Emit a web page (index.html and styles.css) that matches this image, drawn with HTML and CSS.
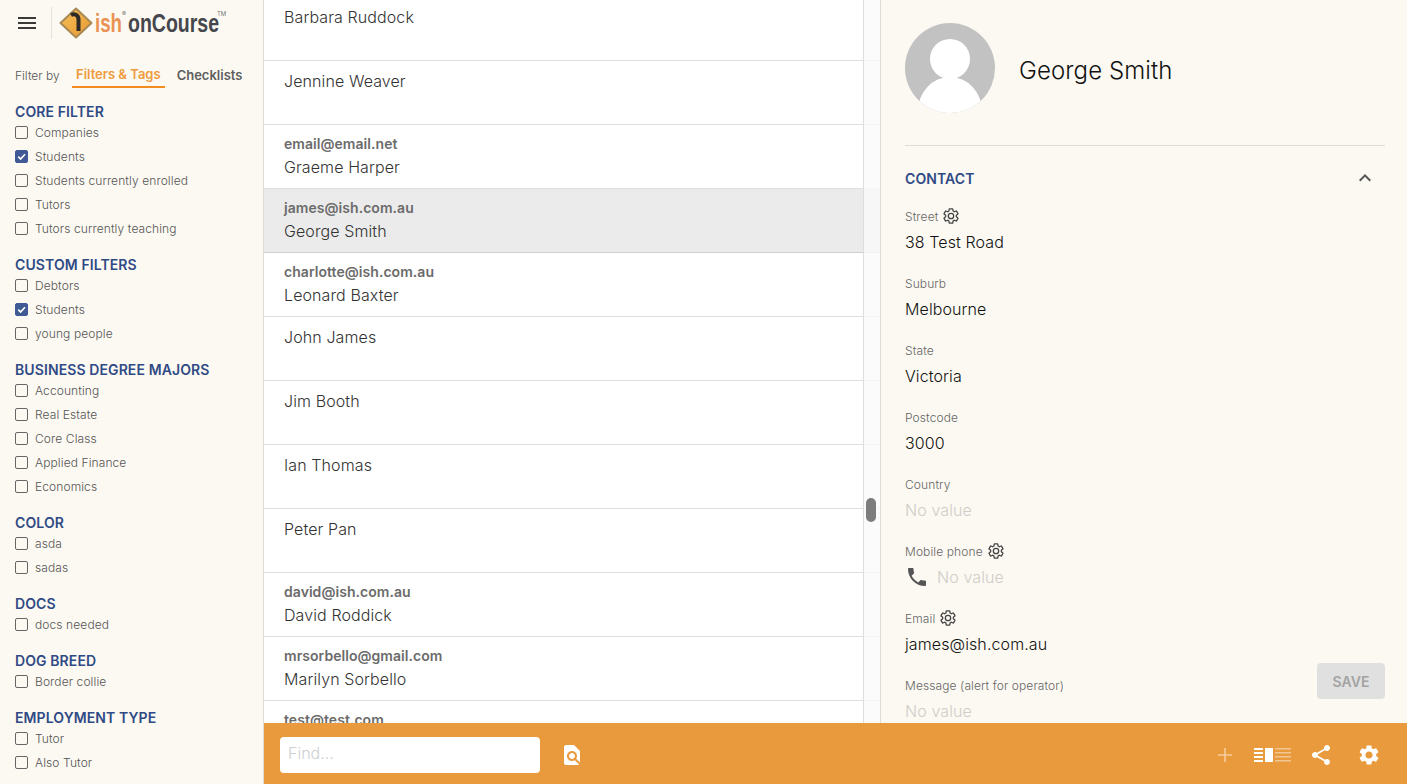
FILE: index.html
```html
<!DOCTYPE html>
<html lang="en">
<head>
  <meta charset="UTF-8" />
  <title>Contacts | ish onCourse</title>
  <link rel="stylesheet" href="styles.css">
</head>
<body>
  <div class="app">

    <aside class="sidebar">
      <div class="brand">
        <svg class="menu-icon" viewBox="0 0 24 24"><path d="M3 18h18v-2H3v2zm0-5h18v-2H3v2zm0-7v2h18V6H3z"/></svg>
        <div class="brand-logo">
          <svg class="logo-mark" viewBox="0 0 34 32">
            <defs>
              <linearGradient id="signFill" x1="0" y1="0" x2="1" y2="1">
                <stop offset="0" stop-color="#f6c25c"/>
                <stop offset="1" stop-color="#e8962f"/>
              </linearGradient>
            </defs>
            <path d="M17 1.500 32.500 16 17 30.500 1.500 16z" fill="url(#signFill)" stroke="#a98a55" stroke-width="2" stroke-linejoin="round"/>
            <path d="M12 8c3-1.500 7-1 7.500 4v12" fill="none" stroke="#2d2a28" stroke-width="4"/>
          </svg>
          <span class="logo-word logo-ish">ish</span>
          <span class="logo-word logo-name">onCourse</span>
          <sup class="logo-reg">®</sup>
          <sup class="logo-tm">TM</sup>
        </div>
      </div>

      <div class="filter-tabs">
        <span class="filter-label">Filter by</span>
        <span class="filter-tab active">Filters &amp; Tags</span>
        <span class="filter-tab">Checklists</span>
      </div>

      <section class="filter-group">
        <h3>CORE FILTER</h3>
        <div class="check-row"><span class="box"></span>Companies</div>
        <div class="check-row"><span class="box checked"><svg viewBox="0 0 12 12"><path d="M2.500 6.200 5 8.700 9.800 3.500"/></svg></span>Students</div>
        <div class="check-row"><span class="box"></span>Students currently enrolled</div>
        <div class="check-row"><span class="box"></span>Tutors</div>
        <div class="check-row"><span class="box"></span>Tutors currently teaching</div>
      </section>

      <section class="filter-group">
        <h3>CUSTOM FILTERS</h3>
        <div class="check-row"><span class="box"></span>Debtors</div>
        <div class="check-row"><span class="box checked"><svg viewBox="0 0 12 12"><path d="M2.500 6.200 5 8.700 9.800 3.500"/></svg></span>Students</div>
        <div class="check-row"><span class="box"></span>young people</div>
      </section>

      <section class="filter-group">
        <h3>BUSINESS DEGREE MAJORS</h3>
        <div class="check-row"><span class="box"></span>Accounting</div>
        <div class="check-row"><span class="box"></span>Real Estate</div>
        <div class="check-row"><span class="box"></span>Core Class</div>
        <div class="check-row"><span class="box"></span>Applied Finance</div>
        <div class="check-row"><span class="box"></span>Economics</div>
      </section>

      <section class="filter-group">
        <h3>COLOR</h3>
        <div class="check-row"><span class="box"></span>asda</div>
        <div class="check-row"><span class="box"></span>sadas</div>
      </section>

      <section class="filter-group">
        <h3>DOCS</h3>
        <div class="check-row"><span class="box"></span>docs needed</div>
      </section>

      <section class="filter-group">
        <h3>DOG BREED</h3>
        <div class="check-row"><span class="box"></span>Border collie</div>
      </section>

      <section class="filter-group">
        <h3>EMPLOYMENT TYPE</h3>
        <div class="check-row"><span class="box"></span>Tutor</div>
        <div class="check-row"><span class="box"></span>Also Tutor</div>
      </section>
    </aside>

    <main class="main">
      <div class="panes">
        <div class="list-pane">
          <div class="list-scroll">
            <div class="row row-clipped"><div class="row-name">Barbara Ruddock</div></div>
            <div class="row"><div class="row-name">Jennine Weaver</div></div>
            <div class="row"><div class="row-email">email@email.net</div><div class="row-name">Graeme Harper</div></div>
            <div class="row selected"><div class="row-email">james@ish.com.au</div><div class="row-name">George Smith</div></div>
            <div class="row"><div class="row-email">charlotte@ish.com.au</div><div class="row-name">Leonard Baxter</div></div>
            <div class="row"><div class="row-name">John James</div></div>
            <div class="row"><div class="row-name">Jim Booth</div></div>
            <div class="row"><div class="row-name">Ian Thomas</div></div>
            <div class="row"><div class="row-name">Peter Pan</div></div>
            <div class="row"><div class="row-email">david@ish.com.au</div><div class="row-name">David Roddick</div></div>
            <div class="row"><div class="row-email">mrsorbello@gmail.com</div><div class="row-name">Marilyn Sorbello</div></div>
            <div class="row"><div class="row-email">test@test.com</div></div>
          </div>
          <div class="scroll-track"><div class="scroll-thumb"></div></div>
        </div>

        <div class="detail-pane">
          <div class="profile">
            <svg class="avatar" viewBox="0 0 90 90">
              <defs><clipPath id="avatarClip"><circle cx="45" cy="45" r="45"/></clipPath></defs>
              <g clip-path="url(#avatarClip)">
                <rect width="90" height="90" fill="#c2c2c2"/>
                <circle cx="45" cy="36" r="20" fill="#fff"/>
                <ellipse cx="45" cy="88" rx="32" ry="34" fill="#fff"/>
              </g>
            </svg>
            <div class="profile-name">George Smith</div>
          </div>

          <div class="section-head">
            <span class="section-title">CONTACT</span>
            <svg class="chevron" viewBox="0 0 24 24"><path d="M12 8l-6 6 1.410 1.410L12 10.830l4.590 4.580L18 14z"/></svg>
          </div>

          <div class="field">
            <div class="field-label">Street <svg class="gear" viewBox="0 0 24 24"><use href="#gearPath"/></svg></div>
            <div class="field-value">38 Test Road</div>
          </div>
          <div class="field">
            <div class="field-label">Suburb</div>
            <div class="field-value">Melbourne</div>
          </div>
          <div class="field">
            <div class="field-label">State</div>
            <div class="field-value">Victoria</div>
          </div>
          <div class="field">
            <div class="field-label">Postcode</div>
            <div class="field-value">3000</div>
          </div>
          <div class="field">
            <div class="field-label">Country</div>
            <div class="field-value empty">No value</div>
          </div>
          <div class="field">
            <div class="field-label">Mobile phone <svg class="gear" viewBox="0 0 24 24"><use href="#gearPath"/></svg></div>
            <div class="field-value empty with-icon">
              <svg class="phone" viewBox="0 0 24 24"><path d="M6.620 10.790c1.440 2.830 3.760 5.140 6.590 6.590l2.200-2.200c.27-.27.67-.36 1.020-.24 1.120.37 2.330.57 3.570.57.55 0 1 .45 1 1V20c0 .55-.45 1-1 1-9.390 0-17-7.610-17-17 0-.55.45-1 1-1h3.500c.55 0 1 .45 1 1 0 1.250.2 2.450.57 3.570.11.35.03.74-.25 1.020l-2.200 2.200z"/></svg>
              No value
            </div>
          </div>
          <div class="field">
            <div class="field-label">Email <svg class="gear" viewBox="0 0 24 24"><use href="#gearPath"/></svg></div>
            <div class="field-value">james@ish.com.au</div>
          </div>
          <div class="field">
            <div class="field-label">Message (alert for operator)</div>
            <div class="field-value empty">No value</div>
          </div>

          <button class="save-btn" type="button">SAVE</button>
        </div>
      </div>

      <footer class="bottom-bar">
        <input class="find-input" type="text" placeholder="Find..." />
        <svg class="find-icon" viewBox="0 0 24 24"><path d="M20 19.590V8l-6-6H6c-1.100 0-1.990.9-1.990 2L4 20c0 1.100.89 2 1.990 2H18c.45 0 .85-.15 1.190-.4l-4.430-4.430c-.8.52-1.740.83-2.760.83-2.760 0-5-2.240-5-5s2.240-5 5-5 5 2.240 5 5c0 1.020-.31 1.960-.83 2.750L20 19.590zM9 13c0 1.660 1.340 3 3 3s3-1.340 3-3-1.340-3-3-3-3 1.340-3 3z"/></svg>
        <div class="bar-actions">
          <svg class="plus-icon" viewBox="0 0 16 16"><path d="M8 1v14M1 8h14"/></svg>
          <svg class="view-icon" viewBox="0 0 37 14">
            <path class="view-solid" d="M0 0h9v2H0zM0 4h9v2H0zM0 8h9v2H0zM0 12h9v2H0zM11 0h8v14h-8z"/>
            <path class="view-faint" d="M21 0h16v1.500H21zM21 4h16v1.500H21zM21 8h16v1.500H21zM21 12h16v1.500H21z"/>
          </svg>
          <svg class="bar-icon" viewBox="0 0 24 24"><path d="M18 16.080c-.76 0-1.440.3-1.960.77L8.910 12.700c.05-.23.09-.46.09-.7s-.04-.47-.09-.7l7.050-4.110c.54.5 1.250.81 2.040.81 1.660 0 3-1.340 3-3s-1.340-3-3-3-3 1.340-3 3c0 .24.04.47.09.7L8.040 9.810C7.500 9.310 6.790 9 6 9c-1.660 0-3 1.340-3 3s1.340 3 3 3c.79 0 1.500-.31 2.040-.81l7.120 4.160c-.05.21-.08.43-.08.65 0 1.610 1.310 2.920 2.920 2.920 1.610 0 2.920-1.310 2.920-2.920s-1.310-2.920-2.920-2.920z"/></svg>
          <svg class="bar-icon" viewBox="0 0 24 24"><path d="M19.140 12.940c.04-.3.06-.61.06-.94 0-.32-.02-.64-.07-.94l2.030-1.580c.18-.14.23-.41.12-.61l-1.920-3.320c-.12-.22-.37-.29-.59-.22l-2.390.96c-.5-.38-1.030-.7-1.620-.94l-.36-2.540c-.04-.24-.24-.41-.48-.41h-3.840c-.24 0-.43.17-.47.41l-.36 2.540c-.59.24-1.130.57-1.620.94l-2.390-.96c-.22-.08-.47 0-.59.22L2.740 8.870c-.12.21-.08.47.12.61l2.030 1.580c-.05.3-.09.63-.09.94s.02.64.07.94l-2.030 1.580c-.18.14-.23.41-.12.61l1.920 3.320c.12.22.37.29.59.22l2.390-.96c.5.38 1.030.7 1.620.94l.36 2.540c.05.24.24.41.48.41h3.840c.24 0 .44-.17.47-.41l.36-2.540c.59-.24 1.130-.56 1.620-.94l2.390.96c.22.08.47 0 .59-.22l1.920-3.320c.12-.22.07-.47-.12-.61l-2.010-1.580zM12 15.600c-1.980 0-3.600-1.620-3.600-3.600s1.620-3.600 3.600-3.600 3.600 1.620 3.600 3.600-1.620 3.600-3.600 3.600z"/></svg>
        </div>
      </footer>
    </main>
  </div>

  <svg class="svg-defs" width="0" height="0">
    <defs>
      <path id="gearPath" d="M19.140 12.940c.04-.3.06-.61.06-.94 0-.32-.02-.64-.07-.94l2.030-1.580c.18-.14.23-.41.12-.61l-1.920-3.320c-.12-.22-.37-.29-.59-.22l-2.390.96c-.5-.38-1.030-.7-1.620-.94l-.36-2.540c-.04-.24-.24-.41-.48-.41h-3.840c-.24 0-.43.17-.47.41l-.36 2.540c-.59.24-1.130.57-1.620.94l-2.390-.96c-.22-.08-.47 0-.59.22L2.740 8.870c-.12.21-.08.47.12.61l2.030 1.580c-.05.3-.09.63-.09.94s.02.64.07.94l-2.030 1.580c-.18.14-.23.41-.12.61l1.920 3.320c.12.22.37.29.59.22l2.390-.96c.5.38 1.030.7 1.620.94l.36 2.540c.05.24.24.41.48.41h3.840c.24 0 .44-.17.47-.41l.36-2.540c.59-.24 1.130-.56 1.620-.94l2.390.96c.22.08.47 0 .59-.22l1.920-3.320c.12-.22.07-.47-.12-.61l-2.010-1.580zM12 15.600c-1.980 0-3.600-1.620-3.600-3.600s1.620-3.600 3.600-3.600 3.600 1.620 3.600 3.600-1.620 3.600-3.600 3.600z"/>
    </defs>
  </svg>
</body>
</html>
```

FILE: styles.css
```css
* {
  margin: 0;
  padding: 0;
  box-sizing: border-box;
  font-family: Inter, 'Noto Sans', sans-serif;
}

html, body {
  height: 100%;
  overflow: hidden;
}

body {
  background: #fcf9f2;
  color: #111;
}

.svg-defs {
  position: absolute;
}

.app {
  display: flex;
  height: 100vh;
}

/* left filter column */
.sidebar {
  width: 264px;
  flex-shrink: 0;
  height: 100%;
  overflow: hidden;
  border-right: 1px solid #dedcd6;
  padding: 0 15px;
}

.brand {
  display: flex;
  align-items: center;
  height: 46px;
}

.menu-icon {
  width: 24px;
  height: 24px;
  flex-shrink: 0;
  fill: #3a3a38;
}

.brand-logo {
  position: relative;
  display: flex;
  align-items: center;
  height: 32px;
  margin-left: 12px;
  padding-left: 7px;
  border-left: 1px solid #e4e1da;
}

.logo-mark {
  width: 34px;
  height: 32px;
  flex-shrink: 0;
}

.logo-word {
  display: block;
  font-family: 'Liberation Sans', sans-serif;
  font-weight: 700;
  font-size: 26px;
  line-height: 32px;
  white-space: nowrap;
  transform-origin: left center;
  transform: scaleX(0.75);
}

.logo-ish {
  width: 33px;
  margin-left: 2px;
  color: #ea9255;
  transform: scaleX(0.72);
}

.logo-name {
  width: 92px;
  color: #45474d;
}

.logo-reg,
.logo-tm {
  position: absolute;
  top: 3px;
  color: #777;
  font-size: 6px;
  line-height: 8px;
}

.logo-reg {
  left: 70px;
}

.logo-tm {
  left: 165px;
}

.filter-tabs {
  display: flex;
  align-items: center;
  height: 24px;
  margin-top: 17px;
  font-size: 13px;
  white-space: nowrap;
}

.filter-label {
  width: 57px;
  flex-shrink: 0;
  font-size: 12px;
  font-weight: 300;
  color: #555;
}

.filter-tab {
  flex-shrink: 0;
  font-weight: 600;
  color: #5e5e5e;
  line-height: 24px;
  padding: 0 4px;
  margin-right: 8px;
}

.filter-tab.active {
  color: #ee9b3d;
  border-bottom: 2px solid #f28c1e;
}

.filter-group {
  margin-bottom: 16px;
}

.filter-tabs + .filter-group {
  margin-top: 16px;
}

.filter-group h3 {
  font-size: 14px;
  font-weight: 600;
  line-height: 17px;
  letter-spacing: 0.1px;
  color: #2f4a85;
}

.check-row {
  display: flex;
  align-items: center;
  height: 24px;
  font-size: 12px;
  font-weight: 300;
  letter-spacing: 0.1px;
  color: #555;
}

.box {
  width: 13px;
  height: 13px;
  margin-right: 7px;
  border: 1.500px solid #666;
  border-radius: 2px;
  flex-shrink: 0;
}

.box.checked {
  background: #3f5a94;
  border-color: #3f5a94;
}

.box svg {
  display: block;
  width: 100%;
  height: 100%;
  fill: none;
  stroke: #fff;
  stroke-width: 1.800;
}

/* middle + right panes */
.main {
  flex: 1;
  min-width: 0;
  display: flex;
  flex-direction: column;
}

.panes {
  flex: 1;
  min-height: 0;
  display: flex;
}

.list-pane {
  position: relative;
  width: 617px;
  flex-shrink: 0;
  height: 100%;
  overflow: hidden;
  background: #fff;
  border-right: 1px solid #dedcd6;
}

.row {
  height: 64px;
  padding: 8px 20px 0;
  border-bottom: 1px solid #dedede;
}

.row-clipped {
  height: 61px;
  padding-top: 5px;
}

.row.selected {
  background: #ebebeb;
  border-bottom-color: #cfcfcf;
}

.row-name {
  font-size: 16px;
  font-weight: 300;
  line-height: 24px;
  letter-spacing: 0.1px;
  color: #333;
}

.row-email {
  font-size: 14px;
  font-weight: 600;
  line-height: 22px;
  letter-spacing: 0.05px;
  color: #6b6b6b;
}

.scroll-track {
  position: absolute;
  top: 0;
  right: 0;
  bottom: 0;
  width: 17px;
  padding-top: 498px;
  background: rgba(250, 250, 250, 0.8);
  border-left: 1px solid #dedede;
}

.scroll-thumb {
  width: 10px;
  height: 24px;
  margin-left: 2px;
  border-radius: 5px;
  background: #7d7d7d;
}

.detail-pane {
  position: relative;
  flex: 1;
  min-width: 0;
  overflow: hidden;
  padding: 23px 22px 0 24px;
}

.profile {
  display: flex;
  align-items: center;
  padding-bottom: 32px;
  border-bottom: 1px solid #dedcd6;
}

.avatar {
  width: 90px;
  height: 90px;
  flex-shrink: 0;
}

.profile-name {
  margin-left: 24px;
  padding-top: 4px;
  font-size: 24px;
  font-weight: 300;
  letter-spacing: 0.1px;
  color: #111;
}

.section-head {
  display: flex;
  align-items: center;
  justify-content: space-between;
  height: 24px;
  margin-top: 20px;
  padding-right: 8px;
}

.section-title {
  font-size: 14px;
  font-weight: 600;
  letter-spacing: 0.1px;
  color: #2f4a85;
}

.chevron {
  width: 24px;
  height: 24px;
  fill: #555;
}

.field {
  height: 67px;
}

.section-head + .field {
  margin-top: 17px;
}

.field-label {
  display: flex;
  align-items: center;
  gap: 4px;
  height: 18px;
  font-size: 12px;
  font-weight: 300;
  letter-spacing: 0.1px;
  color: #666;
}

.gear {
  width: 18px;
  height: 18px;
  fill: none;
  stroke: #444;
  stroke-width: 1.700;
  overflow: visible;
}

.field-value {
  margin-top: 5px;
  font-size: 16px;
  font-weight: 300;
  line-height: 24px;
  letter-spacing: 0.1px;
  color: #111;
}

.field-value.empty {
  color: #cfcdc8;
}

.with-icon {
  display: flex;
  align-items: center;
}

.phone {
  width: 24px;
  height: 24px;
  margin-right: 8px;
  fill: #555;
}

.save-btn {
  position: absolute;
  right: 22px;
  bottom: 24px;
  width: 68px;
  height: 36px;
  border: none;
  border-radius: 4px;
  background: #e0e0e0;
  color: #a3a3a3;
  font-size: 14px;
  font-weight: 600;
}

/* orange bar */
.bottom-bar {
  display: flex;
  align-items: center;
  height: 61px;
  flex-shrink: 0;
  padding: 2px 26px 0 16px;
  background: #e99a3c;
}

.find-input {
  width: 260px;
  height: 36px;
  padding: 0 8px 4px;
  border: none;
  border-radius: 4px;
  background: #fff;
  font-size: 16px;
  font-weight: 300;
  outline: none;
}

.find-input::placeholder {
  color: #cfcfcf;
}

.find-icon {
  width: 24px;
  height: 24px;
  margin-left: 20px;
  fill: #fff;
}

.bar-actions {
  display: flex;
  align-items: center;
  margin-left: auto;
}

.plus-icon {
  width: 16px;
  height: 16px;
  fill: none;
  stroke: #fff;
  stroke-opacity: 0.5;
  stroke-width: 1.600;
}

.view-icon {
  width: 37px;
  height: 14px;
  margin-left: 21px;
}

.view-solid {
  fill: #fff;
}

.view-faint {
  fill: #fff;
  fill-opacity: 0.45;
}

.bar-icon {
  width: 24px;
  height: 24px;
  margin-left: 18px;
  fill: #fff;
}

.bar-icon + .bar-icon {
  margin-left: 24px;
}
```
